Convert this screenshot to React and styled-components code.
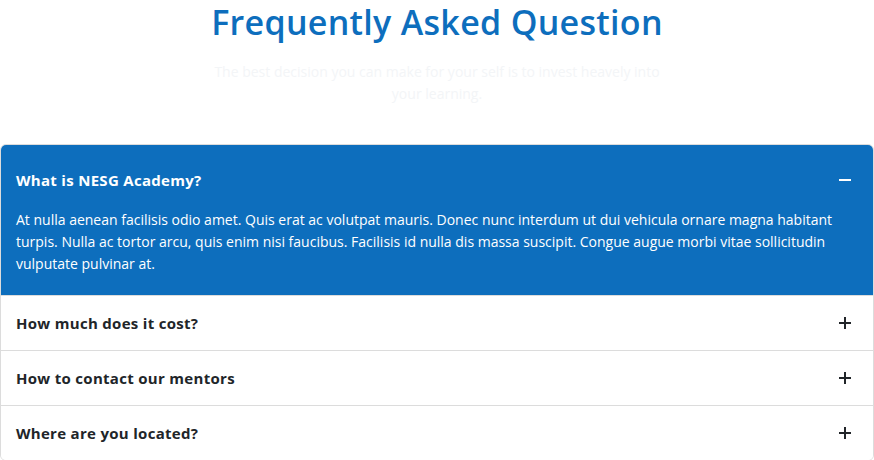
import { useState } from "react";
import styled, { createGlobalStyle } from "styled-components";

const GlobalStyle = createGlobalStyle`
  body {
    margin: 0;
    background: #ffffff;
    font-family: "Open Sans", "Noto Sans", sans-serif;
    color: #212529;
  }
`;

const Section = styled.section`
  width: 874px;
  display: flex;
  flex-direction: column;
  align-items: center;
  padding-top: 2px;
`;

const Title = styled.h2`
  margin: 0;
  font-family: "Open Sans", sans-serif;
  font-weight: 600;
  font-size: 34px;
  line-height: 40px;
  letter-spacing: 0.3px;
  color: #0d6ebd;
`;

const Subtitle = styled.p`
  margin: 19px 0 0;
  max-width: 462px;
  text-align: center;
  font-size: 14px;
  line-height: 22px;
  color: #f3f5f7;
`;

const Accordion = styled.div`
  align-self: stretch;
  margin-top: 39px;
  border: 1px solid #dcdcdc;
  border-radius: 6px;
  overflow: hidden;
`;

const Item = styled.div`
  background: ${(p) => (p.$open ? "#0d6ebd" : "#ffffff")};
  color: ${(p) => (p.$open ? "#ffffff" : "#212529")};
  & + & {
    border-top: 1px solid #dcdcdc;
  }
`;

const Header = styled.button`
  width: 100%;
  display: flex;
  align-items: center;
  justify-content: space-between;
  padding: ${(p) => (p.$open ? "24px 21px 18px 15px" : "16px 21px 16px 15px")};
  border: none;
  background: transparent;
  color: inherit;
  font-family: "Open Sans", "Noto Sans", sans-serif;
  font-weight: 700;
  font-size: 15px;
  line-height: 22px;
  letter-spacing: 0.3px;
  text-align: left;
  cursor: pointer;
`;

const Body = styled.div`
  padding: 0 15px 20px;
  font-size: 14px;
  line-height: 22px;
`;

const Toggle = ({ open }) => (
  <svg width="14" height="14" viewBox="0 0 14 14" fill="none" stroke="currentColor" strokeWidth="2">
    <path d="M1 7h12" />
    {!open && <path d="M7 1v12" />}
  </svg>
);

const faqs = [
  {
    q: "What is NESG Academy?",
    a: "At nulla aenean facilisis odio amet. Quis erat ac volutpat mauris. Donec nunc interdum ut dui vehicula ornare magna habitant turpis. Nulla ac tortor arcu, quis enim nisi faucibus. Facilisis id nulla dis massa suscipit. Congue augue morbi vitae sollicitudin vulputate pulvinar at.",
  },
  { q: "How much does it cost?", a: "" },
  { q: "How to contact our mentors", a: "" },
  { q: "Where are you located?", a: "" },
];

export default function App() {
  const [open, setOpen] = useState(0);

  return (
    <>
      <GlobalStyle />
      <Section>
        <Title>Frequently Asked Question</Title>
        <Subtitle>
          The best decision you can make for your self is to invest heavely into your learning.
        </Subtitle>
        <Accordion>
          {faqs.map((f, i) => (
            <Item key={f.q} $open={open === i}>
              <Header $open={open === i} onClick={() => setOpen(open === i ? -1 : i)}>
                {f.q}
                <Toggle open={open === i} />
              </Header>
              {open === i && <Body>{f.a}</Body>}
            </Item>
          ))}
        </Accordion>
      </Section>
    </>
  );
}
